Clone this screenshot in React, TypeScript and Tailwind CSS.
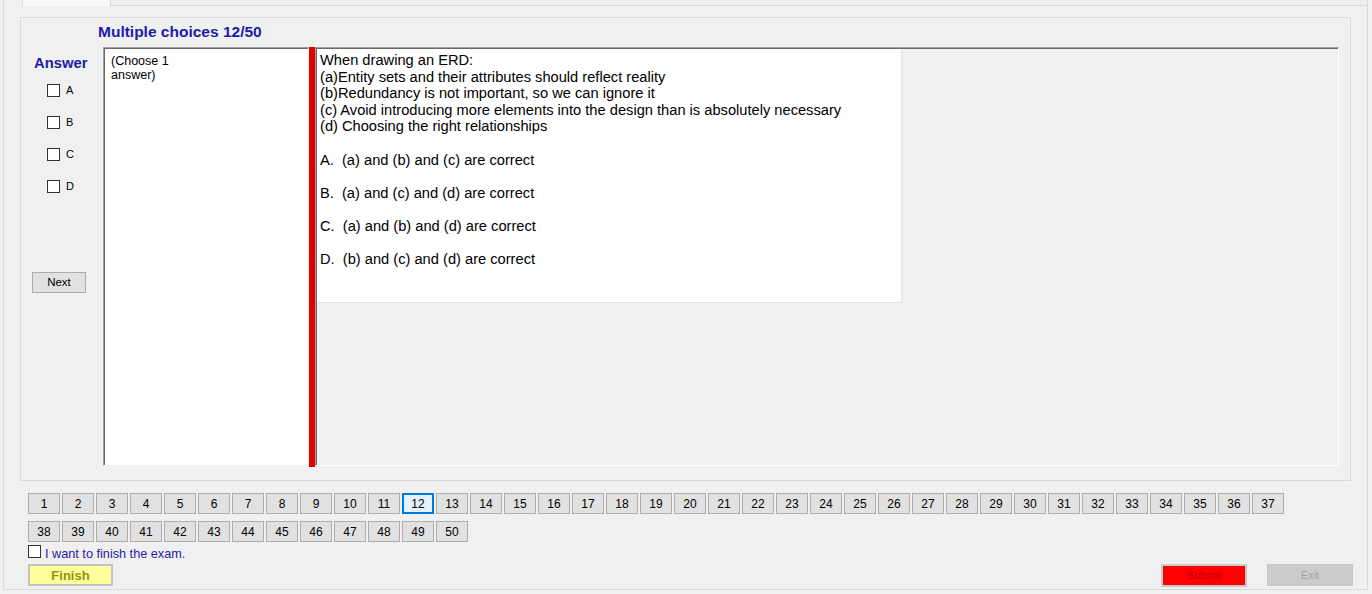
import React from "react";

const ROW1 = Array.from({ length: 37 }, (_, i) => i + 1);
const ROW2 = Array.from({ length: 13 }, (_, i) => i + 38);
const CHOICES = ["A", "B", "C", "D"];

const QUESTION = `When drawing an ERD:
(a)Entity sets and their attributes should reflect reality
(b)Redundancy is not important, so we can ignore it
(c) Avoid introducing more elements into the design than is absolutely necessary
(d) Choosing the right relationships

A.  (a) and (b) and (c) are correct

B.  (a) and (c) and (d) are correct

C.  (a) and (b) and (d) are correct

D.  (b) and (c) and (d) are correct`;

function Box({ className = "" }: { className?: string }) {
  return <span className={`block w-[13px] h-[13px] border border-[#333333] bg-white shrink-0 ${className}`} />;
}

function NumButton({ n, current }: { n: number; current: boolean }) {
  return (
    <button
      className={
        current
          ? "w-[32px] h-[21px] border-2 border-[#0078d7] bg-[#e5f1fb] text-[12px] leading-none text-black"
          : "w-[32px] h-[21px] border border-[#adadad] bg-[#e1e1e1] text-[12px] leading-none text-black"
      }
    >
      {n}
    </button>
  );
}

export default function App() {
  const current = 12;

  return (
    <div className="w-[1372px] h-[594px] bg-[#f0f0f0] overflow-hidden font-['Liberation_Sans',Arial,sans-serif] text-black">
      <div className="pl-[3px]">
        <div className="w-[1365px] h-[590px] border-l border-r border-b border-[#dadada] flex flex-col">
          {/* tab strip */}
          <div className="h-[6px] flex">
            <div className="ml-[18px] w-[89px] border-l border-r border-[#dadada] bg-[#f9f9f9]" />
            <div className="flex-1 border-b border-[#dadada]" />
          </div>

          {/* question panel */}
          <div className="ml-[16px] mt-[11px] w-[1331px] h-[464px] border border-[#dadada] flex flex-col">
            <div className="pl-[77px] pt-[6px] text-[15.5px] leading-[16px] font-bold text-[#1c1ca8]">
              Multiple choices 12/50
            </div>

            <div className="mt-[7px] flex items-start">
              {/* answer column */}
              <div className="w-[82px] flex flex-col">
                <div className="pl-[13px] mt-[8px] text-[14.8px] leading-[16px] font-bold text-[#1c1ca8]">Answer</div>
                <div className="mt-[13px] pl-[26px] flex flex-col gap-[19px]">
                  {CHOICES.map((c) => (
                    <label key={c} className="flex items-center gap-[6px] h-[13px] text-[11px] leading-none">
                      <Box />
                      {c}
                    </label>
                  ))}
                </div>
                <button className="mt-[79px] ml-[11px] w-[54px] h-[21px] border border-[#adadad] bg-[#e1e1e1] text-[11.5px] leading-none">
                  Next
                </button>
              </div>

              {/* hint box */}
              <div className="w-[206px] h-[419px] bg-white border border-t-[#a0a0a0] border-l-[#a0a0a0] border-r-[#f5f5f5] border-b-[#f5f5f5] shadow-[inset_1px_1px_0_#696969] pl-[7px] pt-[6px] text-[12.5px] leading-[14px]">
                (Choose 1
                <br />
                answer)
              </div>

              <div className="w-[6px] h-[420px] bg-[#e40000]" />

              {/* question pane */}
              <div className="w-[1024px] h-[419px] border border-t-[#a0a0a0] border-l-[#a0a0a0] border-r-white border-b-white shadow-[inset_1px_1px_0_#696969] pt-[1px] pl-[1px]">
                <div className="w-[585px] h-[254px] bg-white border-r border-b border-[#e3e3e3] pl-[3px] pt-[3px] text-[14.67px] leading-[16.6px] whitespace-pre">
                  {QUESTION}
                </div>
              </div>
            </div>
          </div>

          {/* navigation */}
          <div className="ml-[24px] mt-[12px] flex flex-col gap-[7px]">
            <div className="flex gap-[2px]">
              {ROW1.map((n) => (
                <NumButton key={n} n={n} current={n === current} />
              ))}
            </div>
            <div className="flex gap-[2px]">
              {ROW2.map((n) => (
                <NumButton key={n} n={n} current={n === current} />
              ))}
            </div>
          </div>

          <div className="ml-[24px] mt-[3px] flex items-start gap-[4px] h-[16px]">
            <Box />
            <span className="mt-[1px] text-[12.7px] leading-[16px] text-[#1f1fa5]">I want to finish the exam.</span>
          </div>

          <div className="mt-[3px] ml-[24px] mr-[14px] flex items-start">
            <button className="w-[85px] h-[22px] border-2 border-[#c4c4c4] bg-[#ffff9c] text-[13px] leading-none font-bold text-[#93930c]">
              Finish
            </button>
            <div className="flex-1" />
            <button className="w-[86px] h-[23px] border-2 border-[#cacaca] bg-[#ff0000] text-[11px] leading-none text-[#c00000]">
              Submit
            </button>
            <button className="ml-[20px] w-[86px] h-[22px] border border-[#c6c6c6] bg-[#cccccc] text-[11px] leading-none text-[#a3a3a3]">
              Exit
            </button>
          </div>
        </div>
      </div>
    </div>
  );
}
